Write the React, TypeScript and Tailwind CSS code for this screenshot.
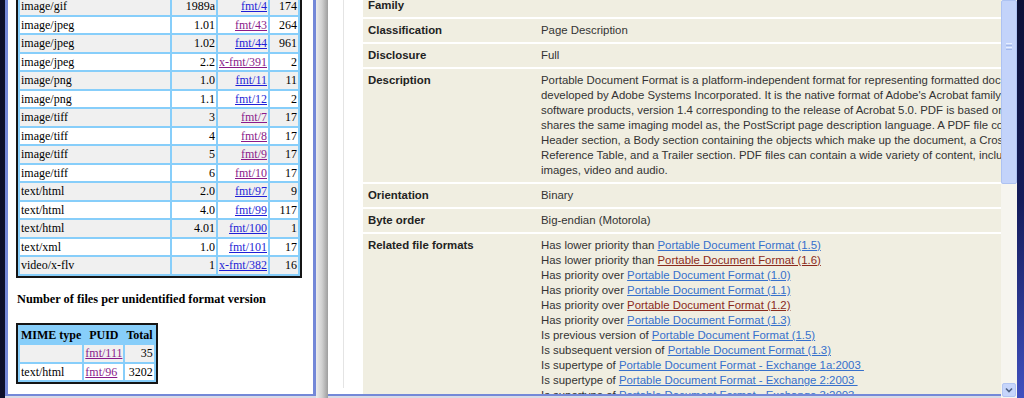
import React from "react";

type Row = [string, string, string, number, boolean];

const leftRows: Row[] = [
  ["image/gif", "1989a", "fmt/4", 174, false],
  ["image/jpeg", "1.01", "fmt/43", 264, true],
  ["image/jpeg", "1.02", "fmt/44", 961, false],
  ["image/jpeg", "2.2", "x-fmt/391", 2, true],
  ["image/png", "1.0", "fmt/11", 11, false],
  ["image/png", "1.1", "fmt/12", 2, false],
  ["image/tiff", "3", "fmt/7", 17, true],
  ["image/tiff", "4", "fmt/8", 17, true],
  ["image/tiff", "5", "fmt/9", 17, true],
  ["image/tiff", "6", "fmt/10", 17, true],
  ["text/html", "2.0", "fmt/97", 9, false],
  ["text/html", "4.0", "fmt/99", 117, false],
  ["text/html", "4.01", "fmt/100", 1, false],
  ["text/xml", "1.0", "fmt/101", 17, false],
  ["video/x-flv", "1", "x-fmt/382", 16, false],
];

const descLines = [
  "Portable Document Format is a platform-independent format for representing formatted documents. It was",
  "developed by Adobe Systems Incorporated. It is the native format of Adobe's Acrobat family of",
  "software products, version 1.4 corresponding to the release of Acrobat 5.0. PDF is based on, and",
  "shares the same imaging model as, the PostScript page description language. A PDF file consists of a",
  "Header section, a Body section containing the objects which make up the document, a Cross-",
  "Reference Table, and a Trailer section. PDF files can contain a wide variety of content, including",
  "images, video and audio.",
];

const related: [string, string, boolean][] = [
  ["Has lower priority than ", "Portable Document Format (1.5)", false],
  ["Has lower priority than ", "Portable Document Format (1.6)", true],
  ["Has priority over ", "Portable Document Format (1.0)", false],
  ["Has priority over ", "Portable Document Format (1.1)", false],
  ["Has priority over ", "Portable Document Format (1.2)", true],
  ["Has priority over ", "Portable Document Format (1.3)", false],
  ["Is previous version of ", "Portable Document Format (1.5)", false],
  ["Is subsequent version of ", "Portable Document Format (1.3)", false],
  ["Is supertype of ", "Portable Document Format - Exchange 1a:2003\u00a0", false],
  ["Is supertype of ", "Portable Document Format - Exchange 2:2003\u00a0", false],
  ["Is supertype of ", "Portable Document Format - Exchange 3:2003\u00a0", false],
];

function LeftLink({ text, visited }: { text: string; visited: boolean }) {
  return (
    <a className={visited ? "underline text-[#8a1a8a]" : "underline text-[#1f1fd6]"}>{text}</a>
  );
}

function PropRow({ label, children }: { label: string; children?: React.ReactNode }) {
  return (
    <div className="flex bg-[#f0eee1] mb-[2px] py-[4px] leading-[15px]">
      <div className="w-[173px] shrink-0 pl-[5px] font-bold text-[#222]">{label}</div>
      <div className="pl-[5px] text-[#333]">{children}</div>
    </div>
  );
}

export default function App() {
  return (
    <div className="w-[1024px] h-[398px] overflow-hidden flex bg-[#d9dbe6]">
      {/* Left frame */}
      <div className="w-[5px] h-full shrink-0 bg-[#0c0f2a]" />
      <div className="w-[311px] h-[396px] shrink-0 border-l-[3px] border-r-[3px] border-b-[2px] border-[#7488d8] bg-white overflow-hidden">
        <div className="-mt-[6px] pl-[8px] font-['Liberation_Serif',serif] text-[12px] text-black">
          <table className="border-separate border-spacing-[2px] bg-[#87cefa] border-2 border-[#151515] table-fixed w-[286px]">
            <colgroup>
              <col className="w-[150px]" />
              <col className="w-[44px]" />
              <col className="w-[50px]" />
              <col className="w-[28px]" />
            </colgroup>
            <tbody>
              {leftRows.map((r, i) => {
                const bg = i % 2 === 0 ? "bg-[#f0f0f0]" : "bg-white";
                return (
                  <tr key={i}>
                    <td className={`${bg} h-[16.5px] p-0 px-[1px] leading-[16px] text-left whitespace-nowrap`}>{r[0]}</td>
                    <td className={`${bg} h-[16.5px] p-0 px-[1px] leading-[16px] text-right whitespace-nowrap`}>{r[1]}</td>
                    <td className={`${bg} h-[16.5px] p-0 px-[1px] leading-[16px] text-right whitespace-nowrap`}>
                      <LeftLink text={r[2]} visited={r[4]} />
                    </td>
                    <td className={`${bg} h-[16.5px] p-0 px-[1px] leading-[16px] text-right whitespace-nowrap`}>{r[3]}</td>
                  </tr>
                );
              })}
            </tbody>
          </table>

          <div className="mt-[14px] pl-[1px] font-bold text-[12.3px] leading-[15px]">
            Number of files per unidentified format version
          </div>

          <table className="mt-[16px] border-separate border-spacing-[2px] bg-[#87cefa] border-2 border-[#151515]">
            <tbody>
              <tr>
                <th className="bg-[#87cefa] h-[16.5px] p-0 px-[1px] leading-[16px] text-left font-bold whitespace-nowrap">MIME type</th>
                <th className="bg-[#87cefa] h-[16.5px] p-0 px-[4px] leading-[16px] text-center font-bold whitespace-nowrap">PUID</th>
                <th className="bg-[#87cefa] h-[16.5px] p-0 px-[1px] leading-[16px] text-right font-bold whitespace-nowrap">Total</th>
              </tr>
              <tr>
                <td className="bg-[#f0f0f0] h-[16.5px] p-0 px-[1px] leading-[16px]"></td>
                <td className="bg-[#f0f0f0] h-[16.5px] p-0 px-[1px] leading-[16px] text-left">
                  <LeftLink text="fmt/111" visited />
                </td>
                <td className="bg-[#f0f0f0] h-[16.5px] p-0 px-[1px] leading-[16px] text-right">35</td>
              </tr>
              <tr>
                <td className="bg-white h-[16.5px] p-0 px-[1px] leading-[16px] text-left whitespace-nowrap">text/html</td>
                <td className="bg-white h-[16.5px] p-0 px-[1px] leading-[16px] text-left">
                  <LeftLink text="fmt/96" visited />
                </td>
                <td className="bg-white h-[16.5px] p-0 px-[1px] leading-[16px] text-right">3202</td>
              </tr>
            </tbody>
          </table>
        </div>
      </div>

      {/* Splitter */}
      <div className="w-[12px] h-full shrink-0 bg-gradient-to-r from-[#ececec] via-[#d0d0d0] to-[#9e9e9e]" />

      {/* Right frame content */}
      <div className="w-[673px] h-[396px] shrink-0 bg-white border-b-[2px] border-[#7488d8] overflow-hidden">
        <div className="ml-[15px] h-full border-l border-[#e4e4e4] pl-[19px]">
          <div className="-mt-[6px] w-[900px] font-['Liberation_Sans',Arial,sans-serif] text-[11.4px]">
            <PropRow label="Family" />
            <PropRow label="Classification">Page Description</PropRow>
            <PropRow label="Disclosure">Full</PropRow>
            <PropRow label="Description">
              {descLines.map((l, i) => (
                <div key={i} className="whitespace-nowrap">{l}</div>
              ))}
            </PropRow>
            <PropRow label="Orientation">Binary</PropRow>
            <PropRow label="Byte order">Big-endian (Motorola)</PropRow>
            <PropRow label="Related file formats">
              {related.map(([pre, link, visited], i) => (
                <div key={i} className="whitespace-nowrap">
                  {pre}
                  <a className={visited ? "underline text-[#8b2a1c]" : "underline text-[#3670cc]"}>{link}</a>
                </div>
              ))}
            </PropRow>
          </div>
        </div>
      </div>

      {/* Scrollbar */}
      <div className="w-[16px] h-full shrink-0 flex flex-col bg-[#f6f5ef]">
        <div className="h-[184px] bg-[#c3d3fa] border border-[#adc2f2] rounded-[2px] relative">
          <div className="absolute left-[4px] right-[4px] top-[42px] flex flex-col gap-[1px]">
            <div className="h-px bg-[#e6eeff]" />
            <div className="h-px bg-[#a3b8ea]" />
            <div className="h-px bg-[#e6eeff]" />
            <div className="h-px bg-[#a3b8ea]" />
          </div>
        </div>
        <div className="flex-1" />
        <div className="h-[14px] mx-[1px] mb-[1px] bg-[#c6d5fb] border border-[#b2c5f2] rounded-[2px] flex items-center justify-center">
          <svg width="8" height="6" viewBox="0 0 8 6">
            <path d="M1 1.5 L4 4.5 L7 1.5" stroke="#4d6185" strokeWidth="1.6" fill="none" />
          </svg>
        </div>
      </div>

      {/* Right window edge */}
      <div className="w-[7px] h-full shrink-0 bg-gradient-to-b from-[#0b1036] via-[#141c5a] to-[#4050c0]" />
    </div>
  );
}
